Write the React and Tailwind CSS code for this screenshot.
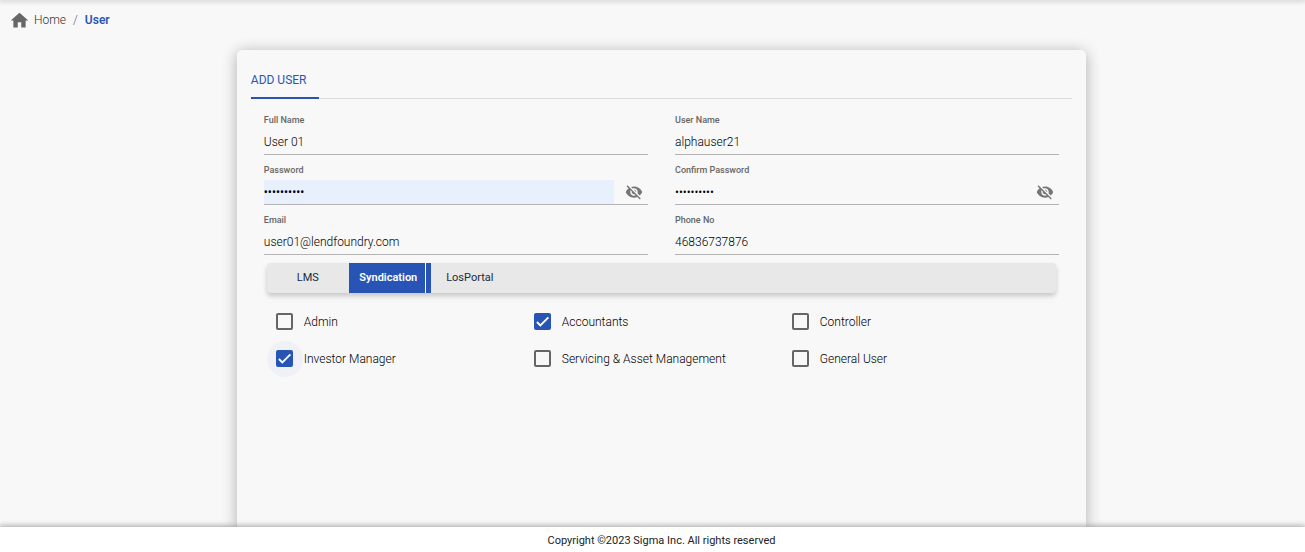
import React from "react";
import clsx from "clsx";
import { MdHome, MdVisibilityOff } from "react-icons/md";

const FIELDS = [
  { id: "fullName", label: "Full Name", type: "text", value: "User 01" },
  { id: "userName", label: "User Name", type: "text", value: "alphauser21" },
  {
    id: "password",
    label: "Password",
    type: "password",
    value: "alpha12345",
    autofilled: true,
  },
  {
    id: "confirmPassword",
    label: "Confirm Password",
    type: "password",
    value: "alpha12345",
  },
  {
    id: "email",
    label: "Email",
    type: "email",
    value: "user01@lendfoundry.com",
  },
  { id: "phone", label: "Phone No", type: "tel", value: "46836737876" },
];

const PORTALS = ["LMS", "Syndication", "LosPortal"];

const ROLES = [
  "Admin",
  "Accountants",
  "Controller",
  "Investor Manager",
  "Servicing & Asset Management",
  "General User",
];

function Field({ field, value, onChange }) {
  const [visible, setVisible] = React.useState(false);
  const isPassword = field.type === "password";

  return (
    <div className="flex flex-col border-b border-[#b4b4b4]">
      <label
        htmlFor={field.id}
        className="h-[25px] pt-2 text-[9px] leading-[14px] font-medium text-[#666]"
      >
        {field.label}
      </label>
      <div className="flex items-center">
        <input
          id={field.id}
          type={isPassword && visible ? "text" : field.type}
          value={value}
          onChange={(e) => onChange(field.id, e.target.value)}
          className={clsx(
            "h-6 min-w-0 flex-1 text-xs outline-none",
            field.autofilled
              ? "bg-[#e8f0fe] font-normal text-black"
              : "font-light text-black"
          )}
        />
        {isPassword && (
          <button
            type="button"
            aria-label="Toggle password visibility"
            onClick={() => setVisible(!visible)}
            className="flex h-6 w-[34px] items-center justify-center pl-1.5 text-[#757575]"
          >
            <MdVisibilityOff className="size-[18px]" />
          </button>
        )}
      </div>
    </div>
  );
}

function RoleCheckbox({ label, checked, focused, onChange }) {
  return (
    <label className="flex h-[37px] items-center gap-px text-xs font-light text-black">
      <span
        className={clsx(
          "grid size-9 shrink-0 place-items-center rounded-full",
          focused && "bg-[#eff1f6]"
        )}
      >
        <input
          type="checkbox"
          checked={checked}
          onChange={onChange}
          className="col-start-1 row-start-1 size-[17px] appearance-none rounded-xs border-2 border-[#666] outline-none checked:border-[#2855b5] checked:bg-[#2855b5]"
        />
        {checked && (
          <svg
            viewBox="0 0 24 24"
            className="pointer-events-none col-start-1 row-start-1 size-[17px] fill-none stroke-white stroke-[2.6]"
          >
            <path d="M4.1 12.7 9 17.6 20.3 6.3" />
          </svg>
        )}
      </span>
      <span>{label}</span>
    </label>
  );
}

export default function App() {
  const [values, setValues] = React.useState(() =>
    Object.fromEntries(FIELDS.map((field) => [field.id, field.value]))
  );
  const [portal, setPortal] = React.useState("Syndication");
  const [roles, setRoles] = React.useState(["Accountants", "Investor Manager"]);
  const [lastRole, setLastRole] = React.useState("Investor Manager");

  function handleFieldChange(id, value) {
    setValues((prev) => ({ ...prev, [id]: value }));
  }

  function toggleRole(role) {
    setLastRole(role);
    setRoles((prev) =>
      prev.includes(role) ? prev.filter((r) => r !== role) : [...prev, role]
    );
  }

  return (
    <div className="flex h-screen flex-col bg-[#f8f8f8] font-['Roboto',sans-serif]">
      <header className="shadow-[0_0_5px_1px_rgba(0,0,0,0.3)]" />
      <main className="flex flex-1 flex-col overflow-hidden">
        <nav className="flex h-10 shrink-0 items-center pl-[9px] text-xs text-[#666]">
          <MdHome className="size-[21px]" />
          <a href="#home" className="ml-1 font-light text-[#333]">
            Home
          </a>
          <span className="mx-[7px] font-light">/</span>
          <a href="#user" className="font-semibold text-[#2855b5]">
            User
          </a>
        </nav>
        <div className="flex flex-1 justify-center pt-[10px] pl-[18px]">
          <section className="w-[66%] rounded-t-[5px] px-3.5 shadow-[0_2px_15px_rgba(0,0,0,0.3)]">
            <div className="mt-[11px] flex border-b border-[#dcdcdc]">
              <h1 className="-mb-px h-[38px] w-[68px] border-b-2 border-[#2855b5] text-xs leading-[38px] whitespace-nowrap text-[#2855b5]">
                ADD USER
              </h1>
            </div>
            <form className="px-[13px] pt-[6px]">
              <div className="grid grid-cols-2 gap-x-[27px]">
                {FIELDS.map((field) => (
                  <Field
                    key={field.id}
                    field={field}
                    value={values[field.id]}
                    onChange={handleFieldChange}
                  />
                ))}
              </div>
              <div className="mx-[3px] mt-2 grid h-[30px] grid-cols-[82px_82px_78px] rounded bg-[#e8e8e8] text-[11px] shadow-[0_3px_5px_rgba(0,0,0,0.2)]">
                {PORTALS.map((name) => (
                  <button
                    key={name}
                    type="button"
                    onClick={() => setPortal(name)}
                    className={clsx(
                      "flex items-center justify-center",
                      name === portal
                        ? "bg-[#2855b5] font-semibold text-white"
                        : "text-[#222b3a]"
                    )}
                  >
                    <span
                      className={clsx(
                        "flex h-full flex-1 items-center justify-center",
                        name === portal && "mr-[5px] border-r border-white pl-[3px]"
                      )}
                    >
                      {name}
                    </span>
                  </button>
                ))}
              </div>
              <div className="mx-[3px] mt-[9px] grid grid-cols-[258px_258px_1fr] border-t border-[#f4f4f4]">
                {ROLES.map((role) => (
                  <RoleCheckbox
                    key={role}
                    label={role}
                    checked={roles.includes(role)}
                    focused={role === lastRole}
                    onChange={() => toggleRole(role)}
                  />
                ))}
              </div>
            </form>
          </section>
        </div>
      </main>
      <footer className="relative h-[25px] bg-white pl-[18px] text-center text-[11px] leading-[27px] text-[#222] shadow-[0_0_6px_1px_rgba(0,0,0,0.35)]">
        Copyright ©2023 Sigma Inc. All rights reserved
      </footer>
    </div>
  );
}
